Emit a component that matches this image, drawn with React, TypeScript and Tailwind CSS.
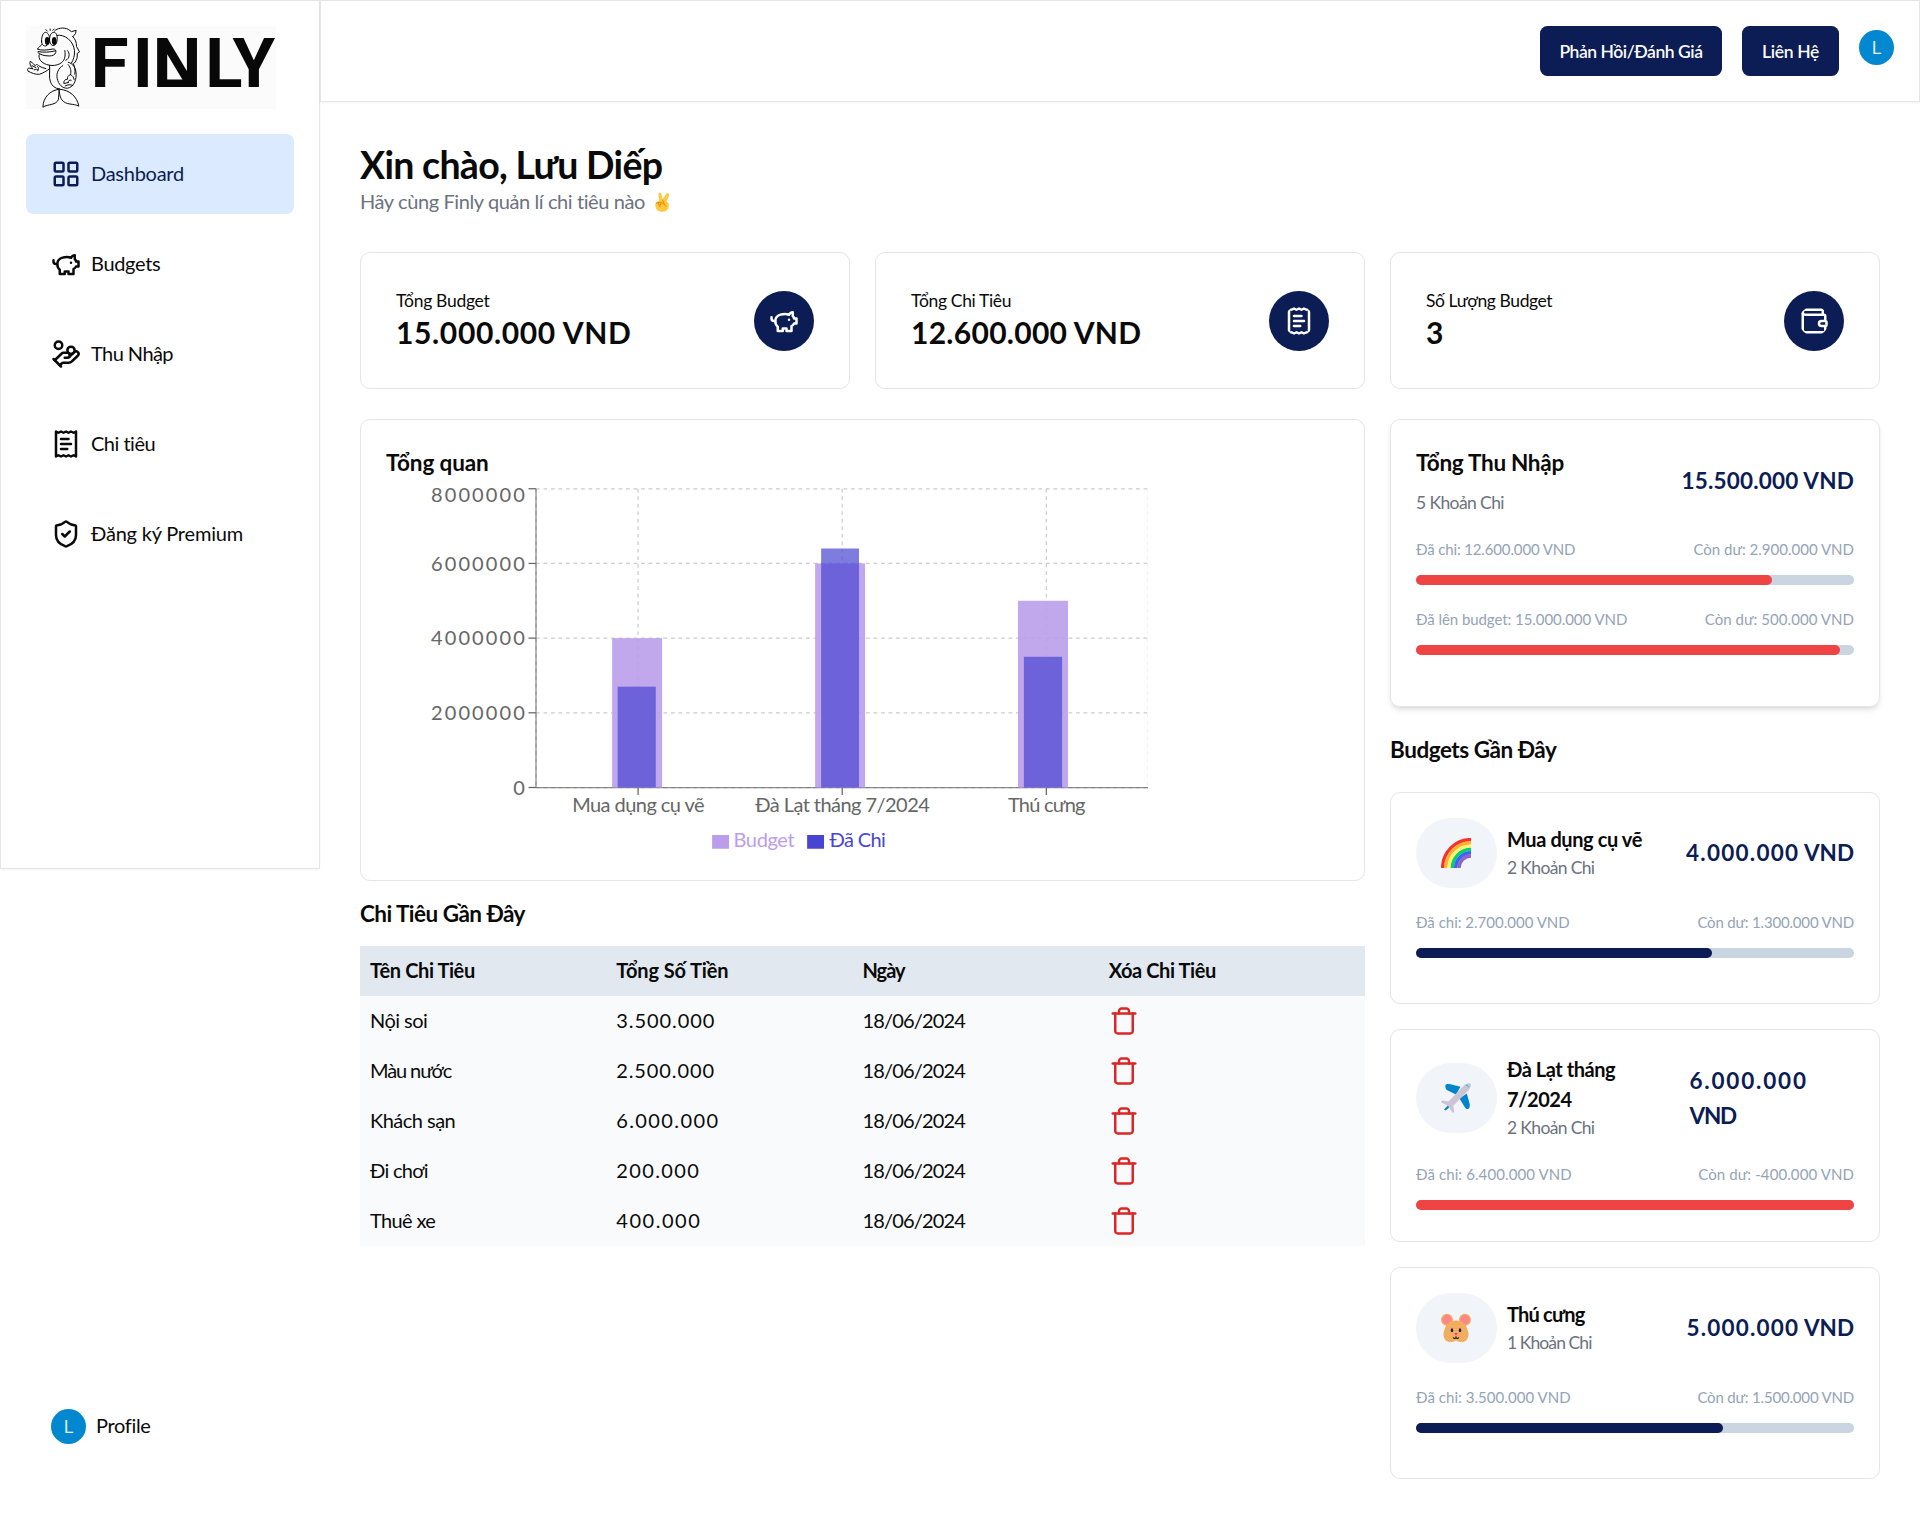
import React from "react";

type IconProps = { className?: string };

function Icon({ className = "", children }: IconProps & { children: React.ReactNode }) {
  return (
    <svg
      viewBox="0 0 24 24"
      fill="none"
      stroke="currentColor"
      strokeWidth="2"
      strokeLinecap="round"
      strokeLinejoin="round"
      className={`shrink-0 ${className}`}
    >
      {children}
    </svg>
  );
}

const GridIcon = ({ className }: IconProps) => (
  <Icon className={className}>
    <rect width="7" height="7" x="3" y="3" rx="1" />
    <rect width="7" height="7" x="14" y="3" rx="1" />
    <rect width="7" height="7" x="14" y="14" rx="1" />
    <rect width="7" height="7" x="3" y="14" rx="1" />
  </Icon>
);

const PigIcon = ({ className }: IconProps) => (
  <Icon className={className}>
    <path d="M19 5c-1.5 0-2.8 1.4-3 2-3.5-1.5-11-.3-11 5 0 1.8 0 3 2 4.5V20h4v-2h3v2h4v-4c1-.5 1.7-1 2-2h2v-4h-2c0-1-.5-1.5-1-2V5z" />
    <path d="M2 9v1c0 1.1.9 2 2 2h1" />
    <path d="M16 11h.01" />
  </Icon>
);

const CoinsIcon = ({ className }: IconProps) => (
  <Icon className={className}>
    <path d="M11 15h2a2 2 0 1 0 0-4h-3c-.6 0-1.1.2-1.4.6L3 17" />
    <path d="m7 21 1.6-1.4c.3-.4.8-.6 1.4-.6h4c1.1 0 2.1-.4 2.8-1.2l4.6-4.4a2 2 0 0 0-2.75-2.91l-4.2 3.9" />
    <path d="m2 16 6 6" />
    <circle cx="16" cy="9" r="2.9" />
    <circle cx="6" cy="5" r="3" />
  </Icon>
);

const ReceiptIcon = ({ className }: IconProps) => (
  <Icon className={className}>
    <path d="M4 2v20l2-1 2 1 2-1 2 1 2-1 2 1 2-1 2 1V2l-2 1-2-1-2 1-2-1-2 1-2-1-2 1Z" />
    <path d="M14 8H8" />
    <path d="M16 12H8" />
    <path d="M13 16H8" />
  </Icon>
);

const ShieldIcon = ({ className }: IconProps) => (
  <Icon className={className}>
    <path d="M20 13c0 5-3.5 7.5-7.66 8.95a1 1 0 0 1-.67-.01C7.5 20.5 4 18 4 13V6a1 1 0 0 1 1-1c2 0 4.5-1.2 6.24-2.72a1.17 1.17 0 0 1 1.52 0C14.51 3.81 17 5 19 5a1 1 0 0 1 1 1z" />
    <path d="m9 12 2 2 4-4" />
  </Icon>
);

const WalletIcon = ({ className }: IconProps) => (
  <Icon className={className}>
    <path d="M19 7V4a1 1 0 0 0-1-1H5a2 2 0 0 0 0 4h15a1 1 0 0 1 1 1v4h-3a2 2 0 0 0 0 4h3a1 1 0 0 0 1-1v-2a1 1 0 0 0-1-1" />
    <path d="M3 5v14a2 2 0 0 0 2 2h15a1 1 0 0 0 1-1v-4" />
  </Icon>
);

const TrashIcon = ({ className }: IconProps) => (
  <Icon className={className}>
    <path d="M3 6h18" />
    <path d="M19 6v14c0 1-1 2-2 2H7c-1 0-2-1-2-2V6" />
    <path d="M8 6V4c0-1 1-2 2-2h4c1 0 2 1 2 2v2" />
  </Icon>
);

function Logo() {
  return (
    <svg viewBox="78 78 750 248" className="block h-[82.5px] w-[250px] overflow-visible bg-[#fbfbfb]">
      <g fill="none" stroke="#0a0a0a" strokeWidth="3" strokeLinejoin="round" strokeLinecap="round">
        <path d="M141 93l-4-4M150 91v-4M158 91l4-4" />
        <path d="M124 124c0-16 5-27 12-27s12 10 12 21-5 19-12 20-12-6-12-14z" />
        <path d="M148 118c1-14 6-21 13-21s11 10 10 22-6 18-12 18-11-8-11-19z" />
        <path d="M163 93c8-9 28-12 41-5l10 7 14-4-2 10-8 9" />
        <path d="M170 106c24-4 50 17 53 46 1 14-3 28-9 37" />
        <path d="M218 110c8 8 11 17 11 29l9 17-7 5c2 9-1 20-8 28" />
        <path d="M124 134c-5 6-9 10-13 13 12 6 32 3 47 0 8 0 10 5 9 10-2 8-10 11-20 11-13 0-27-3-34-10" />
        <path d="M114 155c16 3 34 2 50-2" />
        <path d="M117 164c-2 6 0 12 3 17 13 16 40 20 58 11 15-8 19-20 16-40M202 152c8 8 7 24-5 29" />
        <path d="M148 196c2 18-3 36 3 51 5 11 13 19 26 20M148 207c-9 6-20 13-30 16-11 2-25-4-34-9" />
        <path d="M84 214c-4-5-3-10 5-9l10 2c-8-6-12-15-9-23 7 3 9 10 15 13 3-6 9-2 11 1l10 5 11 3M95 197l12 6M102 210c4-3 9-2 12 0M111 199c6 4 5 11 0 14" />
        <path d="M204 187c14 3 24 17 24 37 0 22-10 38-26 41-16 1-27-12-31-29-3-16 3-31 17-39" />
        <path d="M204 194c8 10 10 20 7 30M211 224c6 3 10 8 11 15M211 224c-7 2-10 8-9 14-8 0-12 5-11 13l13-3M195 258c8-4 16-5 23-1M204 248c0-6 4-9 9-7" />
        <path d="M219 190c5 10 7 21 5 33" />
        <path d="M177 268c-29 4-48 25-49 54 15-10 41-5 47-24l2-30z" />
        <path d="M179 268c31 3 52 23 57 51-16-9-38-2-51-19-4-6-7-14-8-30" />
      </g>
      <ellipse cx="141" cy="123" rx="7" ry="12" fill="#0a0a0a" />
      <ellipse cx="162" cy="123" rx="7" ry="12" fill="#0a0a0a" />
      <text x="272 398 458 616 698" y="261" fontSize="207" className="fill-[#080808] font-[Roboto,sans-serif] font-bold">
        FINLY
      </text>
      <path d="M476 239h100v22H476z" fill="#080808" />
    </svg>
  );
}

function Victory() {
  return (
    <svg viewBox="0 0 15 20" className="ml-[10px] h-5 w-[15px]">
      <path d="M1 10.5 4.2 8.8 3.4 2.6C3.2.3 6 0 6.4 2.1L7.6 7.6 11 2c1.2-1.7 4-.6 3.1 1.4L11.6 9.6l1.9 1.6c.8 2.8.2 8.2-5.6 8.6C3 20 .6 17 .3 13.2Z" fill="#ffc83d" />
      <path d="M1 11.6c2-1.6 5-1.7 6.3-.6l3.7 3M3.4 10.6l1 4M6.2 11l-1.4 3.6M7.6 8l1.7 4" fill="none" stroke="#d67d00" strokeWidth=".8" strokeLinecap="round" />
    </svg>
  );
}

function Rainbow() {
  const bands: [number, string][] = [
    [28.4, "#f8312f"],
    [25.2, "#ffb02e"],
    [21.9, "#fff478"],
    [18.6, "#00d26a"],
    [15.3, "#3f5fff"],
    [12, "#8d65c5"],
  ];
  return (
    <svg viewBox="0 0 30 30" className="size-[30px]">
      {bands.map(([r, c]) => (
        <path key={c} d={`M${30 - r} 30A${r} ${r} 0 0 1 30 ${30 - r}`} fill="none" stroke={c} strokeWidth="3.4" />
      ))}
    </svg>
  );
}

function Plane() {
  return (
    <svg viewBox="0 0 30 30" className="size-[30px]">
      <path d="M4.5 2.2C5 1 7 .8 9.5 1.3L19.5 3.8 15 11.5 5.8 7C4.6 6 4 3.5 4.5 2.2z" fill="#0084ce" />
      <path d="M27.8 25.5c-1.3 1-3 .5-4-1.3L18.5 15.5l7.3-5L28.7 21c.3 2-.1 3.7-.9 4.5z" fill="#0084ce" />
      <path d="M3 26.5l4-4.2 1.6 1.6-3.8 3.6z" fill="#0084ce" />
      <path d="M.3 19.5c-.6-1 .6-2.2 1.9-2l5.3.9L22.5 3C25 .3 28.5-.3 29.5.7s.3 4.3-2.2 6.9L12.3 22.8l.9 5c.2 1.4-1.2 2.4-2 1.7L7.3 23z" fill="#cdc4d6" />
      <path d="M24.8 2.5c1.4-.8 2.7.3 2.4 1.8" fill="none" stroke="#26c9fc" strokeWidth="1.1" />
    </svg>
  );
}

function Hamster() {
  return (
    <svg viewBox="0 0 30 30" className="size-[30px]">
      <circle cx="6" cy="6.8" r="6" fill="#f3ad61" />
      <circle cx="24" cy="6.8" r="6" fill="#f3ad61" />
      <circle cx="6" cy="6.8" r="4.7" fill="#ff8687" />
      <circle cx="24" cy="6.8" r="4.7" fill="#ff8687" />
      <path d="M15 7.5C8 7.5 4.5 12 3.4 17 1.5 21 2 29 9.5 29c2.5 0 4.5-.7 5.5-1.8 1 1.1 3 1.8 5.5 1.8 7.5 0 8-8 6.1-12C25.5 12 22 7.5 15 7.5z" fill="#f3ad61" />
      <ellipse cx="11" cy="17.3" rx="1.2" ry="2" fill="#1c1c1c" />
      <ellipse cx="19" cy="17.3" rx="1.2" ry="2" fill="#1c1c1c" />
      <path d="M13.2 20h3.6L15 22.5z" fill="#ff2e90" />
      <path d="M12.2 24.3c.2 1.4 2.5 1.4 2.8.3.3 1.1 2.6 1.1 2.8-.3M15 24.6v-1" fill="none" stroke="#1c1c1c" strokeWidth="1.1" />
    </svg>
  );
}

const nav = [
  { label: "Dashboard", icon: GridIcon, cls: "bg-blue-100 text-[#0c1c54]", track: "tracking-[-0.26px]" },
  { label: "Budgets", icon: PigIcon, cls: "", track: "tracking-[-0.33px]" },
  { label: "Thu Nhập", icon: CoinsIcon, cls: "", track: "tracking-[-0.56px]" },
  { label: "Chi tiêu", icon: ReceiptIcon, cls: "", track: "tracking-[-0.5px]" },
  { label: "Đăng ký Premium", icon: ShieldIcon, cls: "", track: "tracking-[-0.2px]" },
];

function Avatar() {
  return (
    <span className="flex size-[35px] shrink-0 items-center justify-center rounded-full bg-[#0288d1] font-['Open_Sans',sans-serif] text-[19px] leading-none text-white/90">
      L
    </span>
  );
}

function Sidebar() {
  return (
    <div className="w-[320px] shrink-0">
      <aside className="h-[869px] border border-neutral-200 p-[25px] shadow-[0_1px_2px_rgba(0,0,0,0.05)]">
        <Logo />
        <nav className="mt-[25px] flex flex-col gap-[10px]">
          {nav.map(({ label, icon: I, cls, track }) => (
            <a key={label} className={`flex h-20 items-center gap-[10px] rounded-[7.5px] px-[25px] text-[20px] ${cls}`}>
              <I className="size-[30px]" />
              <span className={`mb-0.5 ${track}`}>{label}</span>
            </a>
          ))}
        </nav>
      </aside>
      <div className="mt-[540px] ml-[51px] flex items-center gap-[10px] text-[20px]">
        <Avatar />
        <span className="mb-[3px] tracking-[-0.33px]">Profile</span>
      </div>
    </div>
  );
}

function Header() {
  return (
    <header className="flex h-[102px] items-start justify-end gap-5 border border-neutral-200 p-[25px] shadow-[0_1px_2px_rgba(0,0,0,0.05)]">
      <button className="h-[50px] w-[182px] rounded-[7.5px] bg-[#0c1c54] pt-0.5 text-[17.5px] font-semibold tracking-[-0.45px] text-neutral-50">
        Phản Hồi/Đánh Giá
      </button>
      <button className="h-[50px] w-[97px] rounded-[7.5px] bg-[#0c1c54] pt-0.5 text-[17.5px] font-semibold tracking-[-0.35px] text-neutral-50">
        Liên Hệ
      </button>
      <div className="pt-[4px]">
        <Avatar />
      </div>
    </header>
  );
}

const stats = [
  { label: "Tổng Budget", value: "15.000.000 VND", icon: PigIcon, lt: "tracking-[-0.3px]", vt: "tracking-[0.64px]" },
  { label: "Tổng Chi Tiêu", value: "12.600.000 VND", icon: ReceiptIcon, lt: "tracking-[-0.35px]", vt: "tracking-[0.28px]" },
  { label: "Số Lượng Budget", value: "3", icon: WalletIcon, lt: "tracking-[-0.42px]", vt: "" },
];

const yTicks: [string, number, number][] = [
  ["8000000", 7, 17.6],
  ["6000000", 66.75, 73.1],
  ["4000000", 126.5, 132.3],
  ["2000000", 186.25, 192.2],
  ["0", 246, 252.1],
];

const categories = [
  { label: "Mua dụng cụ vẽ", x: 201.65, budget: [180.9, 40, 4], spent: [185.3, 30.5, 2.7], track: "tracking-[-0.44px]" },
  { label: "Đà Lạt tháng 7/2024", x: 364.95, budget: [343.3, 40, 6], spent: [348.1, 30.3, 6.4], track: "tracking-[-0.44px]" },
  { label: "Thú cưng", x: 528.25, budget: [505.6, 40, 5], spent: [510.3, 30.6, 3.5], track: "tracking-[-0.6px]" },
];

function Chart() {
  const bottom = 246;
  const height = (millions: number) => (millions / 8) * 239;
  return (
    <svg viewBox="0 0 609.9 300" className="block h-[375px] w-[762.4px] text-[16px]">
      <g stroke="#ccc" strokeDasharray="3 3">
        {yTicks.map(([label, y]) => (
          <line key={label} x1="120" x2="609.9" y1={y} y2={y} />
        ))}
        <line x1="120" x2="120" y1="7" y2="246" />
        {categories.map((c) => (
          <line key={c.label} x1={c.x} x2={c.x} y1="7" y2="246" />
        ))}
        <line x1="609.9" x2="609.9" y1="7" y2="246" />
      </g>
      <g stroke="#666">
        <line x1="120" x2="609.9" y1="246" y2="246" strokeOpacity=".75" />
        <line x1="120" x2="120" y1="7" y2="246" strokeOpacity=".75" />
        {yTicks.map(([label, y]) => (
          <line key={label} x1="114" x2="120" y1={y} y2={y} />
        ))}
        {categories.map((c) => (
          <line key={c.label} x1={c.x} x2={c.x} y1="246" y2="252" />
        ))}
      </g>
      {categories.map(({ label, budget: [bx, bw, bv], spent: [sx, sw, sv] }) => (
        <g key={label}>
          <rect x={bx} width={bw} y={bottom - height(bv)} height={height(bv)} fill="#ba9eeb" fillOpacity=".9" />
          <rect x={sx} width={sw} y={bottom - height(sv)} height={height(sv)} fill="#4845d2" fillOpacity=".7" />
        </g>
      ))}
      <g fill="#666">
        {yTicks.map(([label, , y]) => (
          <text key={label} x="112.8" y={y} textAnchor="end" className="tracking-[1.7px]">
            {label}
          </text>
        ))}
        {categories.map((c) => (
          <text key={c.label} x={c.x} y="265.4" textAnchor="middle" className={c.track}>
            {c.label}
          </text>
        ))}
      </g>
      <rect x="260.9" y="284" width="13.5" height="11" fill="#ba9eeb" />
      <text x="278" y="293.4" className="fill-[#ba9eeb] tracking-[-0.3px]">Budget</text>
      <rect x="336.9" y="284" width="13.5" height="11" fill="#4845d2" />
      <text x="354.8" y="293.4" className="fill-[#4845d2] tracking-[-0.52px]">Đã Chi</text>
    </svg>
  );
}

const expenses = [
  { name: "Nội soi", nt: "tracking-[-0.54px]", amount: "3.500.000", at: "tracking-[0.93px]" },
  { name: "Màu nước", nt: "tracking-[-1.1px]", amount: "2.500.000", at: "tracking-[0.9px]" },
  { name: "Khách sạn", nt: "tracking-[-0.52px]", amount: "6.000.000", at: "tracking-[1.4px]" },
  { name: "Đi chơi", nt: "tracking-[-0.72px]", amount: "200.000", at: "tracking-[1.4px]" },
  { name: "Thuê xe", nt: "tracking-[-0.65px]", amount: "400.000", at: "tracking-[1.55px]" },
];

function ExpenseTable() {
  return (
    <div className="text-[20px]">
      <div className="grid h-[50px] grid-cols-4 items-center bg-slate-200 px-[10px] pb-0.5 font-bold">
        <span className="tracking-[-0.4px]">Tên Chi Tiêu</span>
        <span className="tracking-[-0.12px]">Tổng Số Tiền</span>
        <span className="tracking-[-1px]">Ngày</span>
        <span className="tracking-[-0.4px]">Xóa Chi Tiêu</span>
      </div>
      {expenses.map((e) => (
        <div key={e.name} className="grid h-[50px] grid-cols-4 items-center bg-slate-50 px-[10px]">
          <span className={`mb-0.5 ${e.nt}`}>{e.name}</span>
          <span className={`mb-0.5 ${e.at}`}>{e.amount}</span>
          <span className="mb-0.5 tracking-[-0.85px]">18/06/2024</span>
          <TrashIcon className="size-[30px] text-[#dc2626]" />
        </div>
      ))}
    </div>
  );
}

type UsageProps = { left: string; right: string; lt: string; rt: string; percent: number; danger?: boolean };

function Usage({ left, right, lt, rt, percent, danger }: UsageProps) {
  return (
    <div className="mt-[25px]">
      <div className="flex h-5 items-center justify-between pb-0.5 text-[15px] leading-5 text-[#94a3b8]">
        <span className={lt}>{left}</span>
        <span className={rt}>{right}</span>
      </div>
      <div className="mt-[15px] h-[10px] rounded-full bg-slate-300">
        <div
          className={`h-[10px] rounded-full ${danger ? "bg-[#ef4444]" : "bg-[#0c1c54]"}`}
          style={{ width: `${percent}%` }}
        />
      </div>
    </div>
  );
}

const budgets = [
  {
    emoji: Rainbow, name: "Mua dụng cụ vẽ", nt: "tracking-[-0.4px]", nw: "", items: "2 Khoản Chi", it: "tracking-[-0.65px]",
    amount: "4.000.000", at: "tracking-[1.25px]", aw: "", ut: "",
    usage: { left: "Đã chi: 2.700.000 VND", lt: "tracking-[0px]", right: "Còn dư: 1.300.000 VND", rt: "tracking-[-0.18px]", percent: 67.5 },
  },
  {
    emoji: Plane, name: "Đà Lạt tháng 7/2024", nt: "tracking-[-0.45px]", nw: "w-[130px]", items: "2 Khoản Chi", it: "tracking-[-0.65px]",
    amount: "6.000.000", at: "tracking-[1.8px]", aw: "w-[164.5px]", ut: "tracking-[-1.2px]",
    usage: { left: "Đã chi: 6.400.000 VND", lt: "tracking-[0.1px]", right: "Còn dư: -400.000 VND", rt: "tracking-[0.1px]", percent: 100, danger: true },
  },
  {
    emoji: Hamster, name: "Thú cưng", nt: "tracking-[-0.8px]", nw: "", items: "1 Khoản Chi", it: "tracking-[-0.91px]",
    amount: "5.000.000", at: "tracking-[1.2px]", aw: "", ut: "",
    usage: { left: "Đã chi: 3.500.000 VND", lt: "tracking-[0.05px]", right: "Còn dư: 1.500.000 VND", rt: "tracking-[-0.18px]", percent: 70 },
  },
];

export default function App() {
  return (
    <div className="flex min-h-[1518px] w-full bg-white font-[Lato,sans-serif] text-[#0a0a0a]">
      <Sidebar />
      <div className="min-w-0 flex-1">
        <Header />
        <main className="px-10 pt-10">
          <h1 className="text-[37.5px] leading-[45px] font-bold tracking-[-0.72px]">Xin chào, Lưu Diếp</h1>
          <p className="flex h-[30px] items-center text-[20px] leading-[30px] text-[#6b7280]">
            <span className="mb-0.5 tracking-[-0.4px]">Hãy cùng Finly quản lí chi tiêu nào</span>
            <Victory />
          </p>

          <section className="mt-[35px] grid grid-cols-3 gap-[25px]">
            {stats.map(({ label, value, icon: I, lt, vt }) => (
              <div key={label} className="flex h-[137px] items-center justify-between rounded-[10px] border border-neutral-200 px-[35px]">
                <div>
                  <div className={`text-[17.5px] leading-[25px] ${lt}`}>{label}</div>
                  <div className={`-mt-px mb-px text-[30px] leading-10 font-bold ${vt}`}>{value}</div>
                </div>
                <I className="size-[60px] overflow-hidden rounded-full bg-[#0c1c54] p-[15px] text-white" />
              </div>
            ))}
          </section>

          <section className="mt-[30px] grid grid-cols-3 items-start gap-[25px]">
            <div className="col-span-2">
              <div className="rounded-[10px] border border-neutral-200 p-[25px]">
                <h2 className="text-[22.5px] leading-[35px] font-bold tracking-[-0.1px]">Tổng quan</h2>
                <Chart />
              </div>
              <h2 className="my-[15px] text-[22.5px] leading-[35px] font-bold tracking-[-0.52px]">Chi Tiêu Gần Đây</h2>
              <ExpenseTable />
            </div>

            <div className="flex flex-col gap-[25px]">
              <div className="h-[287.5px] rounded-[10px] border border-neutral-200 p-[25px] shadow-md">
                <div className="flex items-center justify-between">
                  <div>
                    <h2 className="text-[22.5px] leading-[35px] font-bold tracking-[-0.28px]">Tổng Thu Nhập</h2>
                    <p className="mt-[10px] text-[17.5px] leading-[25px] tracking-[-0.6px] text-[#6b7280]">5 Khoản Chi</p>
                  </div>
                  <div className="text-[22.5px] leading-[35px] font-bold tracking-[0.2px] text-[#0c1c54]">15.500.000 VND</div>
                </div>
                <Usage left="Đã chi: 12.600.000 VND" lt="tracking-[-0.14px]" right="Còn dư: 2.900.000 VND" rt="tracking-[0.01px]" percent={81.3} danger />
                <Usage left="Đã lên budget: 15.000.000 VND" lt="tracking-[-0.06px]" right="Còn dư: 500.000 VND" rt="tracking-[0.06px]" percent={96.8} danger />
              </div>

              <h2 className="text-[22.5px] leading-[35px] font-bold tracking-[-0.46px]">Budgets Gần Đây</h2>

              {budgets.map(({ emoji: E, ...b }) => (
                <div key={b.name} className="h-[212.5px] rounded-[10px] border border-neutral-200 p-[25px]">
                  <div className="flex items-center justify-between">
                    <div className="flex items-center gap-[10.5px]">
                      <div className="flex h-[70px] w-[80.5px] shrink-0 items-center justify-center rounded-full bg-slate-100">
                        <E />
                      </div>
                      <div>
                        <h3 className={`-mt-px mb-px text-[20px] leading-[30px] font-bold ${b.nw} ${b.nt}`}>{b.name}</h3>
                        <p className={`text-[17.5px] leading-[25px] text-[#6b7280] ${b.it}`}>{b.items}</p>
                      </div>
                    </div>
                    <div className={`text-[22.5px] leading-[35px] font-bold text-[#0c1c54] ${b.aw}`}>
                      <span className={b.at}>{b.amount}</span> <span className={b.ut}>VND</span>
                    </div>
                  </div>
                  <Usage {...b.usage} />
                </div>
              ))}
            </div>
          </section>
        </main>
      </div>
    </div>
  );
}
